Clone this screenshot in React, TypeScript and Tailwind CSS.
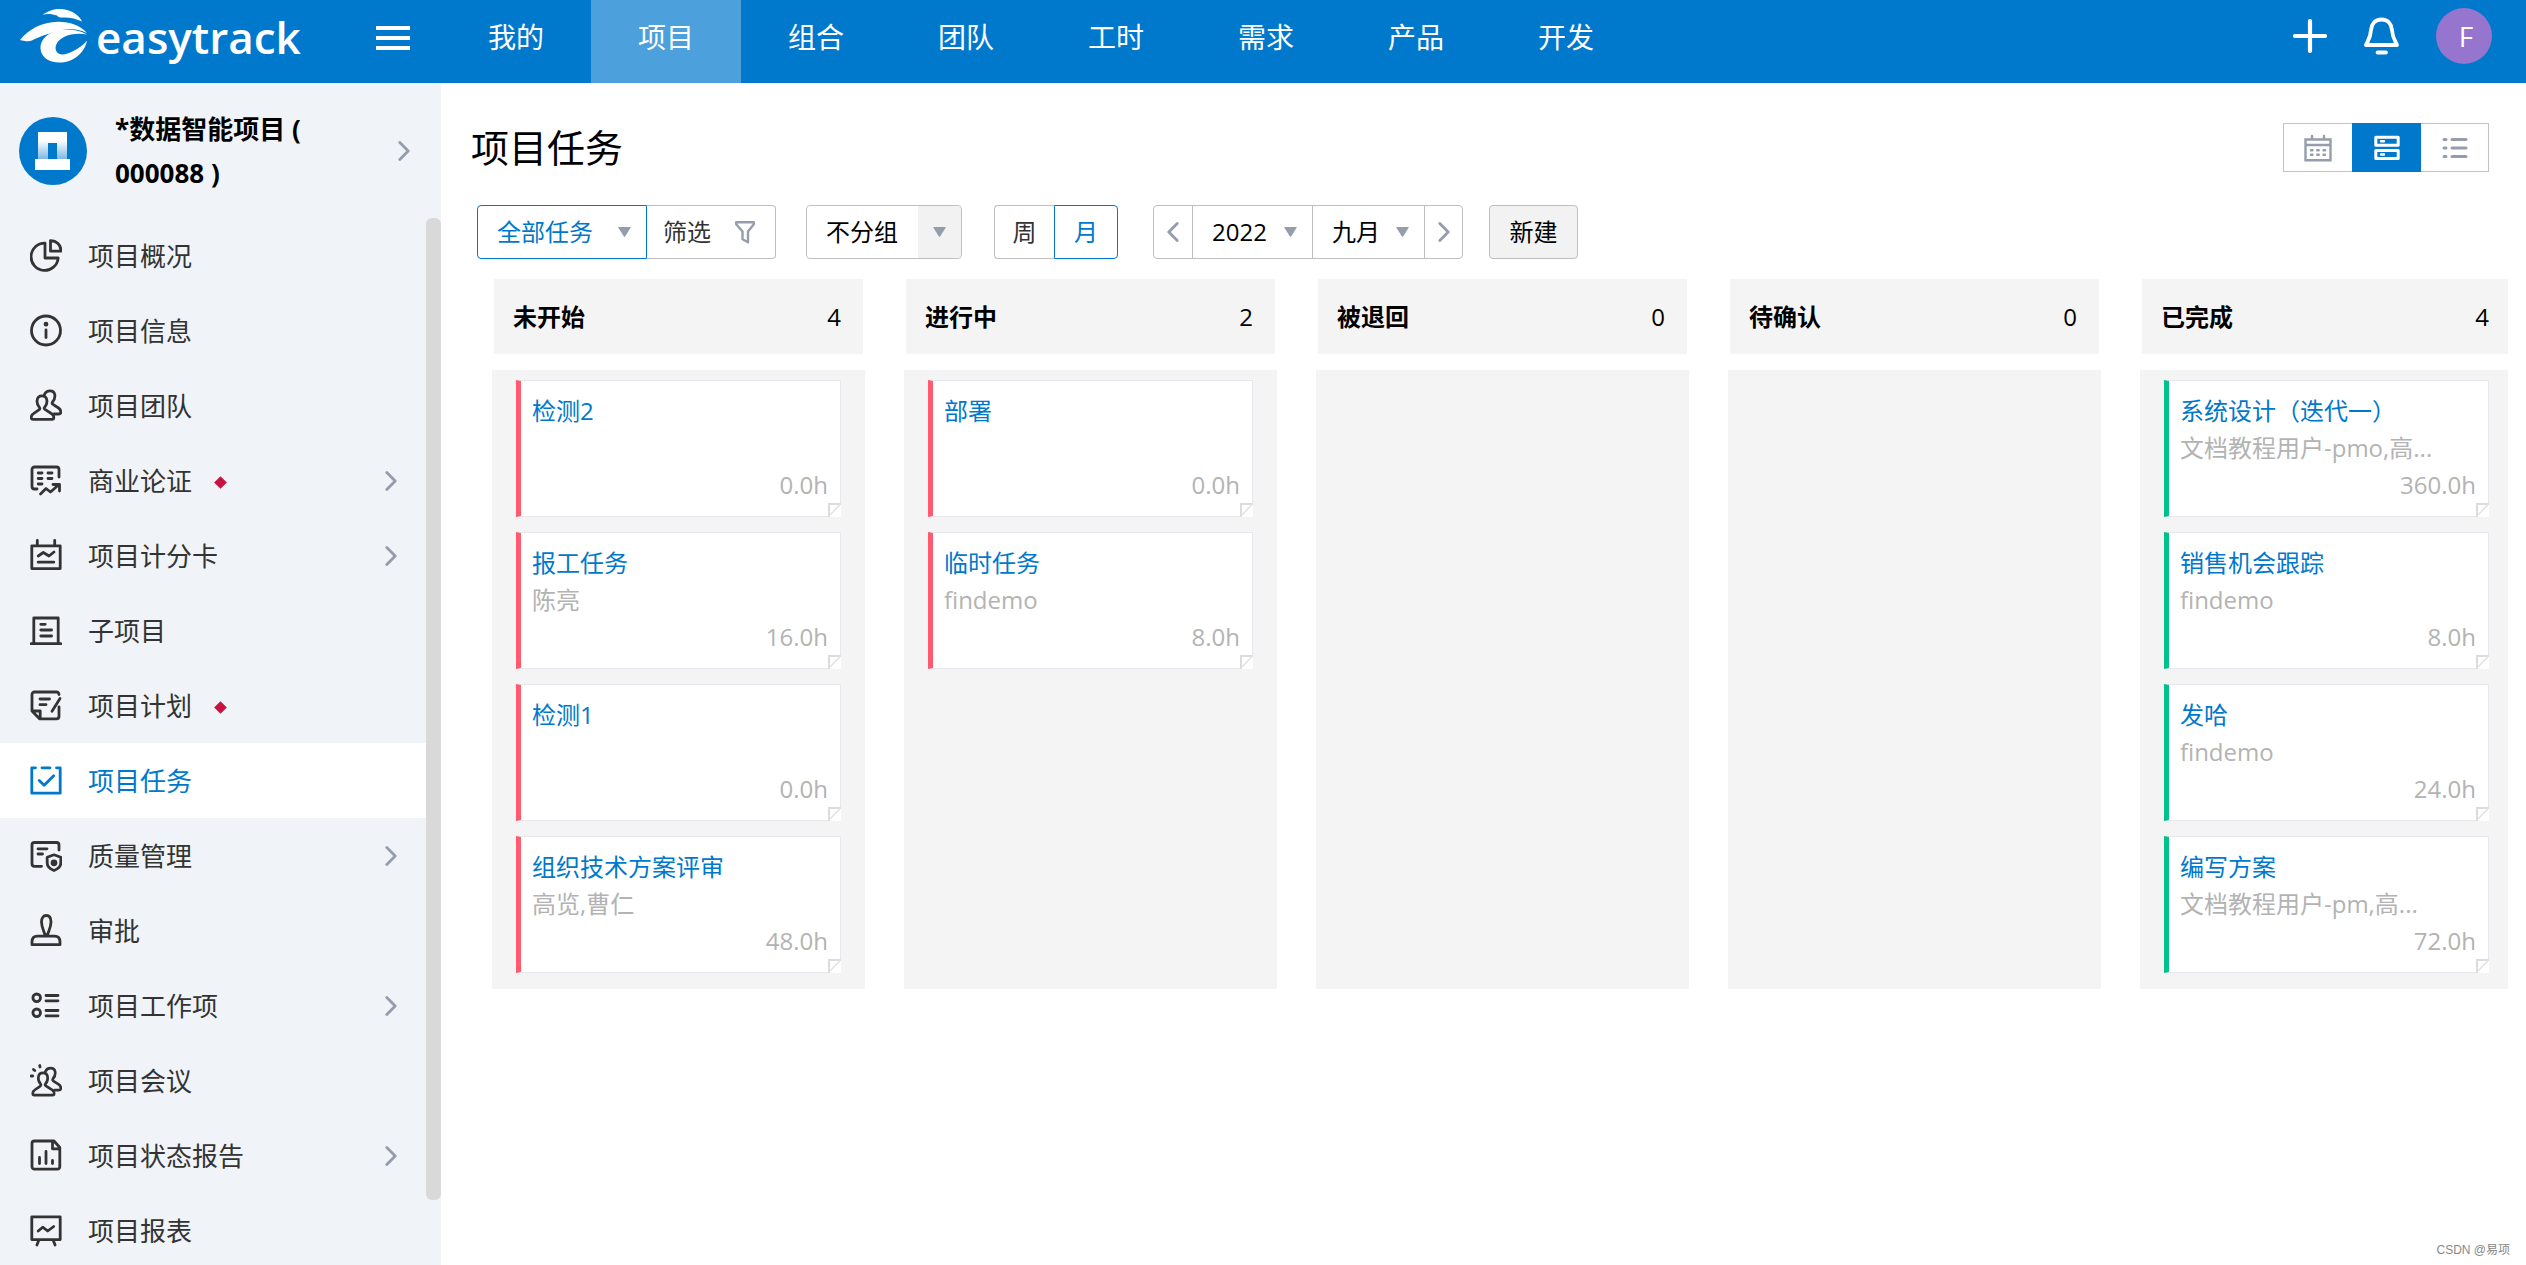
import type { ReactNode } from "react";

type Task = { title: string; owner?: string; hours: string };
type Column = { name: string; tasks: Task[]; done?: boolean };
type MenuItem = { label: string; icon: ReactNode; flagged?: boolean; expandable?: boolean; active?: boolean };

const NAV = ["我的", "项目", "组合", "团队", "工时", "需求", "产品", "开发"];

const PEOPLE = (
  <>
    <path d="M9.5 18.5C6 15 5.8 6.8 12 6.8s6 8.2 2.5 11.7c-.6 1-.2 1.6.9 2.2L22 25c1.4 1 1.8 2 1.8 3.5 0 1.3-.7 1.8-1.8 1.8H3c-1.3 0-1.8-.6-1.8-1.8 0-2 .8-3 2.3-3.9l5-3.4c1.3-.9 1.8-1.7 1-2.7Z" />
    <path d="M14.5 5.5C15.5 2.8 17.5 1.8 20 1.8c6 0 6 7.2 2.5 11.2-.7 1-.5 1.8.5 2.4l5.5 3.6c1.5 1 2.3 2.5 2.3 4s-.8 2-2.3 2h-4.3" />
  </>
);

const MENU: MenuItem[] = [
  {
    label: "项目概况",
    icon: <path d="M15 4.2A13.6 13.6 0 1 0 28.2 19H15ZM20.5 1.6V12.2H31C31 6 26.5 1.6 20.5 1.6Z" />,
  },
  {
    label: "项目信息",
    icon: (
      <>
        <circle cx="16" cy="16.5" r="14.5" />
        <path d="M16 16v7.5" />
        <circle cx="16" cy="10.2" r="1" fill="currentColor" />
      </>
    ),
  },
  { label: "项目团队", icon: PEOPLE },
  {
    label: "商业论证",
    flagged: true,
    expandable: true,
    icon: (
      <path d="M7 25H4.5A2.5 2.5 0 0 1 2 22.5V5.5A2.5 2.5 0 0 1 4.5 3h22A2.5 2.5 0 0 1 29 5.5V13M8.2 9H12M18 9h4M8.2 14.5H12M18 14.5h4M8.2 20H12M10.5 30l5.5-5.5 4.5 3.5 8.5-7.5M23 20.5h6.5V27" />
    ),
  },
  {
    label: "项目计分卡",
    expandable: true,
    icon: <path d="M1.8 6.8h28.4v22.8H1.8ZM7.3 6V1.5M24.7 6V1.5M8.2 17l5.1-3.5L19 17l5-4M8.2 23.2h15.6" />,
  },
  {
    label: "子项目",
    icon: <path d="M3.8 29V4h24.4v25M1.2 29.6h29.6M10.8 10.3h4.4M10.8 16h10.8M10.8 22h10.8" />,
  },
  {
    label: "项目计划",
    flagged: true,
    icon: (
      <path d="M29 5.5C29 4 28 3 26.5 3h-22A2.5 2.5 0 0 0 2 5.5V22l7.5 7.8h17A2.5 2.5 0 0 0 29 27.3V18M2 22h8.2v7.5M10 10h9.5M10 15.7h6M30 9.5l-8 12.8" />
    ),
  },
  {
    label: "项目任务",
    active: true,
    icon: <path d="M5.5 3.8H1.8v25.4h28.4V3.8h-3.7M12 3.8h8M9.2 16.5l5 4.8 9.5-9.5" />,
  },
  {
    label: "质量管理",
    expandable: true,
    icon: (
      <>
        <path d="M11.5 27.3h-7A2.5 2.5 0 0 1 2 24.8V6a2.5 2.5 0 0 1 2.5-2.5h22A2.5 2.5 0 0 1 29 6v5M8 9.8h9M8 15h4.5M24 15.8l6.8 2.4V24c0 3.5-3 6-6.8 7.5-3.8-1.5-6.8-4-6.8-7.5v-5.8Z" />
        <circle cx="24" cy="23.8" r="2" fill="currentColor" />
      </>
    ),
  },
  {
    label: "审批",
    icon: (
      <path d="M14.5 19.5c-1-3-3-7-3-11.5 0-4 1.8-6.5 4.8-6.5S21 4 21 8c0 4.500-2 8.500-3 11.500M14.500 19.500q1.700 2.600 3.500 0M2 30.700V28c0-4 2-5.800 5.500-5.800h17c3.500 0 5.500 1.800 5.500 5.800v2.700Z" />
    ),
  },
  {
    label: "项目工作项",
    expandable: true,
    icon: (
      <>
        <circle cx="6.7" cy="8.8" r="3.8" />
        <circle cx="6.7" cy="23.8" r="3.8" />
        <path d="M16 6.5h12M16 11.8h12M16 21.5h12M16 26.8h12" />
      </>
    ),
  },
  {
    label: "项目会议",
    icon: (
      <>
        <g transform="translate(1.6 2.4) scale(.95)">{PEOPLE}</g>
        <path d="M9.7 1.5l.3 1.5M3.5 5.5l1.2 1M1.2 12h1.500" />
      </>
    ),
  },
  {
    label: "项目状态报告",
    expandable: true,
    icon: (
      <path d="M24 2H4.5A2.5 2.5 0 0 0 2 4.5v23.2a2.5 2.5 0 0 0 2.5 2.5h22.8a2.5 2.5 0 0 0 2.5-2.5V8.5ZM22.5 2.5v7.3h7M9.5 18.5v6M16 12.5v12M22.5 21.5v3" />
    ),
  },
  {
    label: "项目报表",
    icon: <path d="M1.8 2.8h28.4v22.8H1.8ZM8.7 26.5L6.9 31M23.3 26.5l1.800 4.500M8.200 17l4.500-3.800 5 3.800 6-4.500" />,
  },
];

const COLUMNS: Column[] = [
  {
    name: "未开始",
    tasks: [
      { title: "检测2", hours: "0.0h" },
      { title: "报工任务", owner: "陈亮", hours: "16.0h" },
      { title: "检测1", hours: "0.0h" },
      { title: "组织技术方案评审", owner: "高览,曹仁", hours: "48.0h" },
    ],
  },
  {
    name: "进行中",
    tasks: [
      { title: "部署", hours: "0.0h" },
      { title: "临时任务", owner: "findemo", hours: "8.0h" },
    ],
  },
  { name: "被退回", tasks: [] },
  { name: "待确认", tasks: [] },
  {
    name: "已完成",
    done: true,
    tasks: [
      { title: "系统设计（迭代一）", owner: "文档教程用户-pmo,高...", hours: "360.0h" },
      { title: "销售机会跟踪", owner: "findemo", hours: "8.0h" },
      { title: "发哈", owner: "findemo", hours: "24.0h" },
      { title: "编写方案", owner: "文档教程用户-pm,高...", hours: "72.0h" },
    ],
  },
];

function Chevron({ left = false }: { left?: boolean }) {
  return (
    <svg width="12" height="20" viewBox="0 0 12 20" fill="none" stroke="#959cab" strokeWidth="2.8" strokeLinecap="round" strokeLinejoin="round">
      <path d={left ? "M10.2 1.5 1.8 10l8.400 8.500" : "M1.800 1.500 10.200 10l-8.400 8.500"} />
    </svg>
  );
}

function Caret() {
  return (
    <svg className="pointer-events-none absolute right-[15px]" width="13" height="10" viewBox="0 0 13 10" fill="#959cab">
      <path d="M.8 0h11.4q.8 0 .4.8L7.300 9.300q-.8 1-1.600 0L.4.8Q0 0 .8 0Z" />
    </svg>
  );
}

function Logo() {
  return (
    <a href="#" className="flex h-full w-[356px] items-start pt-2 pl-5 text-white">
      <svg width="68" height="55" viewBox="0 0 68 55" fill="currentColor">
        <path d="M22.500 6.500C28 3.500 32 1 39 1c12 0 20 6 23 12.500-5-2.500-12-4.200-19-4-3 0-5-.2-6-2C33 6 28 5.500 22.500 6.500Z" />
        <path d="M0 32C9 21 22 14 38 13.800c11-.2 22 3.500 29 11.200-8-3.500-17-5-25-3C31 24.500 17 29.500 12 32.500 8.500 34 4 33 0 32Z" />
        <path d="M67 26.500c-8-1.500-17-.5-23 2.500-7 3.500-9.500 9-8 13.500 1.500 4 6 5 11.500 3C55 43 62 38.500 67 32.500 65 44 54 54.500 40 54.500c-12 0-19.500-6-19.500-14.500 0-10 10-17.500 23-18.500 9-.5 17 1 23.500 5Z" />
      </svg>
      <span className="pl-2 text-[44px] leading-[58px] font-semibold">easytrack</span>
    </a>
  );
}

function Header() {
  return (
    <header className="flex h-[83px] shrink-0 bg-[#0078cc] text-white">
      <Logo />
      <button aria-label="菜单" className="mb-2 ml-5 flex w-[34px] flex-col justify-center gap-[6px]">
        <span className="h-1 w-full bg-white" />
        <span className="h-1 w-full bg-white" />
        <span className="h-1 w-full bg-white" />
      </button>
      <nav className="ml-[31px] flex">
        {NAV.map((name) => (
          <a
            key={name}
            href="#"
            className={`flex w-[150px] justify-center pt-4 text-[28px] leading-[42px] ${name === "项目" ? "bg-[#4ca0db]" : ""}`}
          >
            {name}
          </a>
        ))}
      </nav>
      <div className="mr-[34px] mb-[11px] ml-auto flex items-center">
        <button aria-label="新建">
          <svg width="34" height="34" viewBox="0 0 34 34" stroke="currentColor" strokeWidth="4.2" strokeLinecap="round">
            <path d="M17 2v30M2 17h30" />
          </svg>
        </button>
        <button aria-label="通知" className="ml-[37px]">
          <svg width="35" height="38" viewBox="0 0 35 38" fill="none" stroke="currentColor" strokeWidth="3.8" strokeLinecap="round" strokeLinejoin="round">
            <path d="M17.500 2.500C11 2.500 7.500 7 7 13c-.5 8-3 10.500-5 15h31c-2-4.500-4.500-7-5-15-.5-6-4-10.500-10.500-10.500ZM13.500 35.500h8.500" />
          </svg>
        </button>
        <button className="ml-[37px] size-14 rounded-full bg-[#9575cd] pl-1 text-[28px] leading-[56px]">F</button>
      </div>
    </header>
  );
}

function Sidebar() {
  return (
    <aside className="flex w-[441px] shrink-0 flex-col bg-[#f0f4f8]">
      <a href="#" className="flex h-[135px] shrink-0 items-center pl-[19px] text-black">
        <svg width="68" height="68" viewBox="0 0 68 68">
          <defs>
            <linearGradient id="arch" x1="0" y1="0" x2="0" y2="1">
              <stop offset=".3" stopColor="#fff" />
              <stop offset="1" stopColor="#76b4e2" />
            </linearGradient>
          </defs>
          <circle cx="34" cy="34" r="34" fill="#0078cc" />
          <path d="M19 15h29v28H38V26h-9v17H19Z" fill="url(#arch)" />
          <path d="M16 42h35v11H16Z" fill="#fff" />
        </svg>
        <span className="ml-7 flex-1 text-[26px] leading-[44px] font-bold">
          *数据智能项目 (
          <br />
          000088 )
        </span>
        <span className="mr-[31px]">
          <Chevron />
        </span>
      </a>
      <div className="flex min-h-0 flex-1">
        <nav className="min-w-0 flex-1 overflow-hidden">
          {MENU.map((item) => (
            <a
              key={item.label}
              href="#"
              className={`flex h-[75px] items-center pr-[29px] pl-[30px] text-[26px] ${item.active ? "bg-white text-[#0078cc]" : "text-[#333]"}`}
            >
              <svg width="32" height="33" viewBox="0 0 32 33" fill="none" stroke="currentColor" strokeWidth="2.8" strokeLinecap="round" strokeLinejoin="round">
                {item.icon}
              </svg>
              <span className="ml-[26px] pt-[2px]">{item.label}</span>
              {item.flagged && <span className="mt-1 ml-6 size-[9px] rotate-45 bg-[#c8133f]" />}
              {item.expandable && (
                <span className="ml-auto">
                  <Chevron />
                </span>
              )}
            </a>
          ))}
        </nav>
        <div className="mb-[65px] w-[15px] rounded-md bg-[#d9d9d9]" />
      </div>
    </aside>
  );
}

function ViewSwitch() {
  return (
    <div className="flex h-[49px] text-[#959cab]">
      <button aria-label="日历" className="flex w-[69px] items-center justify-center border border-r-0 border-[#bfc2cb]">
        <svg width="28" height="28" viewBox="0 0 28 28" fill="none" stroke="currentColor" strokeWidth="2.4" strokeLinecap="round">
          <path d="M1.500 5.500h25v20.800h-25ZM1.500 11h25M8 5V2M20 5V2M7 16.200h1.500M13.200 16.200h1.500M19.500 16.200H21M7 20.800h1.500M13.200 20.800h1.500M19.500 20.800H21" />
        </svg>
      </button>
      <button aria-label="看板" className="flex w-[69px] items-center justify-center bg-[#0078cc] text-white">
        <svg width="26" height="26" viewBox="0 0 26 26" fill="none" stroke="currentColor" strokeWidth="3" strokeLinejoin="round">
          <path d="M1.800 2.200h22.400v8H1.800ZM1.800 15.500h22.400v8H1.800Z" />
          <path d="M7 6.200h3M7 19.500h3" strokeLinecap="round" strokeWidth="2.4" />
        </svg>
      </button>
      <button aria-label="列表" className="flex w-[68px] items-center justify-center border border-l-0 border-[#bfc2cb]">
        <svg width="26" height="22" viewBox="0 0 26 22" stroke="currentColor" strokeWidth="3" strokeLinecap="round">
          <path d="M2 2.500h2M10 2.500h14M2 11h2M10 11h14M2 19.500h2M10 19.500h14" />
        </svg>
      </button>
    </div>
  );
}

function Toolbar() {
  return (
    <div className="flex h-[54px] pl-9 text-2xl text-black">
      <label className="relative flex w-[170px] items-center rounded-l-[4px] border border-[#0078cc] text-[#0078cc]">
        <select aria-label="任务范围" className="size-full appearance-none pl-[19px] outline-none">
          <option>全部任务</option>
        </select>
        <Caret />
      </label>
      <button className="flex w-[129px] items-center justify-between rounded-r-[4px] border border-l-0 border-[#bfbfbf] pr-5 pl-4 text-[#333]">
        筛选
        <svg width="20" height="23" viewBox="0 0 20 23" fill="none" stroke="#959cab" strokeWidth="2.4" strokeLinejoin="round">
          <path d="M1.200 1.200h17.600v2L13 10.500v10.800l-5.500-3V10.500L1.200 3.200Z" />
        </svg>
      </button>

      <label className="relative ml-[30px] flex w-[156px] items-center rounded-[4px] border border-[#bfbfbf]">
        <select aria-label="分组" className="size-full appearance-none rounded-[4px] bg-linear-to-r from-white from-[111px] to-[#f2f2f2] to-[111px] pl-[19px] outline-none">
          <option>不分组</option>
        </select>
        <Caret />
      </label>

      <div className="ml-8 flex">
        <button className="w-[60px] rounded-l-[4px] border border-r-0 border-[#bfbfbf] text-[#333]">周</button>
        <button className="w-16 rounded-r-[4px] border border-[#0078cc] text-[#0078cc]">月</button>
      </div>

      <div className="ml-[35px] flex divide-x divide-[#bfbfbf] rounded-[4px] border border-[#bfbfbf]">
        <button aria-label="上一月" className="flex w-[39px] items-center justify-center">
          <Chevron left />
        </button>
        <label className="relative flex w-[120px] items-center">
          <select aria-label="年份" className="size-full appearance-none pl-[19px] outline-none">
            <option>2022</option>
          </select>
          <Caret />
        </label>
        <label className="relative flex w-28 items-center">
          <select aria-label="月份" className="size-full appearance-none pl-[19px] outline-none">
            <option>九月</option>
          </select>
          <Caret />
        </label>
        <button aria-label="下一月" className="flex w-[37px] items-center justify-center">
          <Chevron />
        </button>
      </div>

      <button className="ml-[26px] w-[89px] rounded-[4px] border border-[#bfbfbf] bg-[#f2f2f2]">新建</button>
    </div>
  );
}

function TaskCard({ task, done }: { task: Task; done?: boolean }) {
  return (
    <article
      className={`relative h-[137px] border border-l-[5px] border-[#e6e8ee] bg-white pt-[11px] pr-3 pl-[11px] text-2xl leading-[37px] text-[#b3b3b3] ${done ? "border-l-[#00c08b]" : "border-l-[#ff5a70]"}`}
    >
      <a href="#" className="block truncate text-[#0078cc]">
        {task.title}
      </a>
      <p className="h-[37px] truncate">{task.owner}</p>
      <p className="text-right">{task.hours}</p>
      {/* folded corner */}
      <svg className="absolute -right-px -bottom-px" width="13" height="14" viewBox="0 0 13 14" fill="none">
        <path d="M0 0h13v14H0Z" fill="#fff" />
        <path d="M1 14V1h12" stroke="#dcdcdc" strokeWidth="2" />
        <path d="M1 13 12.500 1" stroke="#e2e2e2" strokeWidth="1.5" />
      </svg>
    </article>
  );
}

function Board() {
  return (
    <div className="mr-[18px] ml-[51px] overflow-hidden pt-5">
      <div className="-mr-[5px] grid grid-cols-5 gap-x-[39px]">
        {COLUMNS.map((col) => (
          <section key={col.name} className="flex flex-col">
            <h2 className="mx-[2px] flex h-[75px] items-center justify-between bg-[#f4f4f4] pr-[22px] pl-[19px] text-2xl font-bold text-black">
              {col.name}
              <span className="font-normal">{col.tasks.length}</span>
            </h2>
            <div className="mt-4 flex flex-1 flex-col gap-[15px] bg-[#f4f4f4] px-6 pt-[10px] pb-4">
              {col.tasks.map((task) => (
                <TaskCard key={task.title} task={task} done={col.done} />
              ))}
            </div>
          </section>
        ))}
      </div>
    </div>
  );
}

export default function App() {
  return (
    <div className="relative flex h-screen flex-col overflow-hidden bg-white font-['Open_Sans','Noto_Sans_CJK_SC',sans-serif]">
      <Header />
      <div className="flex min-h-0 flex-1">
        <Sidebar />
        <main className="min-w-0 flex-1 pt-10">
          <div className="mb-[33px] flex h-[49px] items-center justify-between pr-[37px] pl-[30px]">
            <h1 className="text-[38px] leading-[49px] text-black">项目任务</h1>
            <ViewSwitch />
          </div>
          <Toolbar />
          <Board />
        </main>
      </div>
      <span className="absolute right-4 bottom-[7px] font-['Liberation_Sans','Noto_Sans_CJK_SC',sans-serif] text-xs text-[#888]">
        CSDN @易项
      </span>
    </div>
  );
}
